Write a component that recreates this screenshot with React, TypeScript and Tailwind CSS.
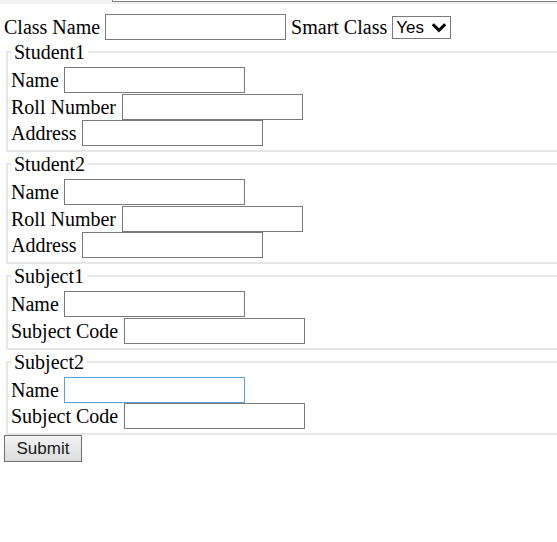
import { useState } from 'react';

type Field = { label: string; focused?: boolean };

const serif = "font-['Liberation_Serif','Times_New_Roman',serif]";
const sans = "font-['Liberation_Sans',Arial,sans-serif]";

function TextBox({ focused }: { focused?: boolean }) {
  return (
    <input
      type="text"
      className={`w-[181px] h-[26px] bg-white outline-none border ${
        focused ? 'border-[#5aa0d8]' : 'border-[#7a7a7a]'
      }`}
    />
  );
}

function Group({ title, fields }: { title: string; fields: Field[] }) {
  return (
    <fieldset className="ml-[2px] -mr-[20px] border-2 border-[#e6e6e6] pl-[3px] pr-0 pt-[3px] pb-[3.5px] min-w-0">
      <legend className="px-[3px] text-[20px] leading-[24px] text-black">{title}</legend>
      <div className="flex flex-col">
        {fields.map((f) => (
          <div key={f.label} className="h-[26.5px] flex items-center gap-[5.5px] text-[20px] leading-[24px]">
            <span>{f.label}</span>
            <TextBox focused={f.focused} />
          </div>
        ))}
      </div>
    </fieldset>
  );
}

export default function App() {
  const [smart] = useState('Yes');

  return (
    <div className={`w-full min-h-[542px] overflow-hidden bg-white text-black ${serif}`}>
      <div className="h-[4px] bg-[#f0f0f0]">
        <div className="ml-[112px] h-[2px] border-l border-b border-[#808080] bg-white" />
      </div>

      <div className="px-[4px]">
        <div className="mt-[10px] h-[26px] flex items-center gap-[5px] text-[20px] leading-[24px]">
          <span>Class Name</span>
          <TextBox />
          <span>Smart Class</span>
          <div
            className={`w-[59px] h-[23px] border border-[#7a7a7a] bg-white flex items-center justify-between pl-[3px] pr-[3px] text-[17px] leading-none ${sans}`}
          >
            <span>{smart}</span>
            <svg width="16" height="11" viewBox="0 0 16 11">
              <path d="M1.8 2.2 L8 8.4 L14.2 2.2" fill="none" stroke="#000" strokeWidth="3" />
            </svg>
          </div>
        </div>

        <Group
          title="Student1"
          fields={[{ label: 'Name' }, { label: 'Roll Number' }, { label: 'Address' }]}
        />
        <Group
          title="Student2"
          fields={[{ label: 'Name' }, { label: 'Roll Number' }, { label: 'Address' }]}
        />
        <Group title="Subject1" fields={[{ label: 'Name' }, { label: 'Subject Code' }]} />
        <Group
          title="Subject2"
          fields={[{ label: 'Name', focused: true }, { label: 'Subject Code' }]}
        />

        <button
          className={`w-[78px] h-[27px] border border-[#707070] bg-gradient-to-b from-[#f3f3f3] to-[#dcdcdc] text-[17px] text-[#1a1a1a] ${sans}`}
        >
          Submit
        </button>
      </div>
    </div>
  );
}
